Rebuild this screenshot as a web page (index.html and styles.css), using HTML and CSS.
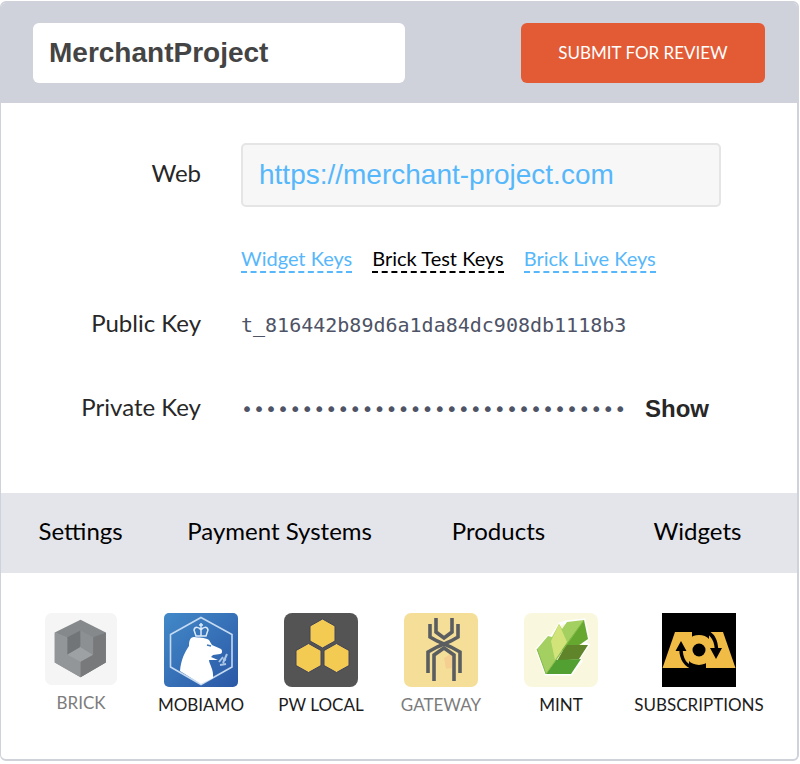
FILE: index.html
```html
<!DOCTYPE html>
<html lang="en">
<head>
  <meta charset="UTF-8">
  <title>MerchantProject</title>
  <meta name="viewport" content="width=device-width, initial-scale=1">
  <link rel="stylesheet" href="styles.css">
</head>
<body>

  <main class="project">

    <!-- Header -->
    <header class="project-header">
      <input class="project-name" type="text" value="MerchantProject" aria-label="Project name">
      <button class="submit-btn" type="button">SUBMIT FOR REVIEW</button>
    </header>

    <!-- Keys -->
    <section class="details">
      <label class="label" for="web">Web</label>
      <input class="url" type="url" id="web" value="https://merchant-project.com">

      <div class="key-links">
        <a class="key-link" href="#widget">Widget Keys</a>
        <a class="key-link active" href="#test">Brick Test Keys</a>
        <a class="key-link" href="#live">Brick Live Keys</a>
      </div>

      <label class="label" for="publicKey">Public Key</label>
      <input class="key" type="text" id="publicKey" value="t_816442b89d6a1da84dc908db1118b3" readonly>

      <label class="label" for="privateKey">Private Key</label>
      <div class="private">
        <input class="key" type="password" id="privateKey" value="t_000000000000000000000000000000" readonly>
        <button class="show-btn" type="button">Show</button>
      </div>
    </section>

    <!-- Navigation -->
    <nav class="tabs">
      <a href="#settings">Settings</a>
      <a href="#systems">Payment Systems</a>
      <a href="#products">Products</a>
      <a href="#widgets">Widgets</a>
    </nav>

    <!-- Products -->
    <section class="products">
      <a class="product disabled" href="#brick">
        <svg class="icon small" viewBox="0 0 74 74">
          <rect width="74" height="74" rx="7" fill="#f5f5f5"/>
          <path d="M36.5 7L62.5 20L36.5 34L10 20Z" fill="#85898b"/>
          <path d="M10 20L36.5 34V66L10 51Z" fill="#929698"/>
          <path d="M62.5 20L36.5 34V66L62.5 51Z" fill="#77797b"/>
          <path d="M10 20L23 25V43L36.5 50V66L10 51Z" fill="#929698"/>
          <path d="M62.5 20L49.5 25V43L36.5 50V66L62.5 51Z" fill="#77797b"/>
          <path d="M23 25L36.5 18V35L23 43Z" fill="#727577"/>
          <path d="M36.5 18L49.5 25V43L36.5 35Z" fill="#8c9092"/>
          <path d="M23 43L36.5 35L49.5 43L36.5 50Z" fill="#9da1a3"/>
        </svg>
        <span>BRICK</span>
      </a>
      <a class="product" href="#mobiamo">
        <svg class="icon" viewBox="0 0 74 74">
          <defs>
            <linearGradient id="sky" x1="0" y1="0" x2="1" y2="1">
              <stop offset="0" stop-color="#4289c8"/>
              <stop offset="1" stop-color="#2b58a6"/>
            </linearGradient>
          </defs>
          <rect width="74" height="74" rx="5" fill="url(#sky)"/>
          <path d="M37 4.5L68 21.5V54L37 71.5L6.5 54V21.5Z" fill="none" stroke="#c5daf0" stroke-width="1.6"/>
          <path d="M16 58C17 46 21 39 25 33C25 28 26 24 30 24C35 25 40 24 45 27L48 32L57 36C59 38 58 41 56 41L49 42L47 44L54 47L45 47C45 51 50 56 49 65L37 71Z" fill="#fff"/>
          <path d="M43 32L47 33" stroke="#3979bd" stroke-width="1.5"/>
          <path d="M32 23L30 17C31 13 35 14 37 17C39 14 43 13 44 17L42 23ZM37 10V23M35 12H39" fill="none" stroke="#dceaf8" stroke-width="1.5"/>
          <path d="M55 49L59 44M59 50L63 41M56 52L62 51M59 46L62 47" stroke="#a9c6e6" stroke-width="2"/>
        </svg>
        <span>MOBIAMO</span>
      </a>
      <a class="product" href="#local">
        <svg class="icon" viewBox="0 0 74 74">
          <rect width="74" height="74" rx="8" fill="#545454"/>
          <g fill="#f4cb52" stroke="#40425a" stroke-width="1">
            <path d="M38.5 6L51 13V28L38.5 35L26 28V13Z"/>
            <path d="M24.5 30.5L37 37.5V52.5L24.5 59.5L12 52.5V37.5Z"/>
            <path d="M52.5 30.5L65 37.5V52.5L52.5 59.5L40 52.5V37.5Z"/>
          </g>
        </svg>
        <span>PW LOCAL</span>
      </a>
      <a class="product disabled" href="#gateway">
        <svg class="icon" viewBox="0 0 74 74">
          <rect width="74" height="74" rx="7" fill="#f5df98"/>
          <path d="M40 45L48 40V55L42 56Z" fill="#f5cf91"/>
          <g fill="none" stroke="#5b5e60" stroke-width="3.6">
            <path d="M32 5V19L40 25L48 19V5"/>
            <path d="M26 11V24L33 28L47 34L56 39V60"/>
            <path d="M54 11V24L47 28L33 34L24 39V60"/>
            <path d="M30 68V42L40 35L50 42V68"/>
          </g>
        </svg>
        <span>GATEWAY</span>
      </a>
      <a class="product" href="#mint">
        <svg class="icon" viewBox="0 0 74 74">
          <rect width="74" height="74" rx="8" fill="#f9f8df"/>
          <path d="M60 7L42 9L36 11L28 23L24 24L13 36L22 61H47L57 48L55 45L64 32L60 30L64 25Z" fill="#f9f8df" stroke="#fff" stroke-width="3"/>
          <path d="M60 7L43 9L38 16L35 11L28 24L24 23L13 36L22 61Z" fill="#a4cf61"/>
          <path d="M35 11L27 28L31 47L43 29Z" fill="#d2e479"/>
          <path d="M60 7L64 26L48 37H38Z" fill="#66a730"/>
          <path d="M42 32L64 32L55 46L33 48Z" fill="#5f842a"/>
          <path d="M32 47L57 46L47 61H22Z" fill="#53a032"/>
          <path d="M13 36L22 61L60 7" fill="none" stroke="#83ba45" stroke-width="1"/>
        </svg>
        <span>MINT</span>
      </a>
      <a class="product" href="#subscriptions">
        <svg class="icon" viewBox="0 0 74 74">
          <rect width="74" height="74" fill="#000"/>
          <path d="M13 19H61L73.5 55H.5Z" fill="#f0bc45"/>
          <path d="M30 18H47V26H30ZM27 48H44V56H27Z" fill="#000"/>
          <circle cx="37" cy="37" r="15" fill="#f0bc45"/>
          <circle cx="37" cy="37" r="6.5" fill="#000"/>
          <path d="M19 36C19 46 24 53 32 55M54.500 38C54.500 28 51 21 43 18" fill="none" stroke="#000" stroke-width="3.500"/>
          <path d="M13.500 38L19 28L24.500 38ZM48 35H60L54 46Z" fill="#000"/>
        </svg>
        <span>SUBSCRIPTIONS</span>
      </a>
    </section>

  </main>

</body>
</html>
```
FILE: styles.css
```css
* { box-sizing: border-box; }
body { margin: 0; background: #fff; color: #272727; font-family: Lato, sans-serif; }
a { color: inherit; text-decoration: none; }
input, button { margin: 0; padding: 0; border: none; background: none; font-family: inherit; }

.project {
  margin: 1px 1px 0 0; border: 2px solid #cfd2da; border-left-width: 1px;
  border-radius: 6px; overflow: hidden;
}

/* Header */
.project-header {
  display: flex; justify-content: space-between; gap: 20px;
  padding: 20px 32px; background: #cfd2da;
}
.project-name {
  flex: 0 1 372px; min-width: 0; height: 60px; padding: 0 16px;
  background: #fff; border-radius: 6px; color: #444;
  font: bold 28px "Liberation Sans", sans-serif;
}
.submit-btn {
  flex: 0 0 244px; height: 60px; padding-bottom: 2px; border-radius: 6px;
  background: #e35b35; color: #fff; font-size: 17px; cursor: pointer;
}

/* Keys */
.details {
  display: grid; grid-template-columns: 200px 1fr; column-gap: 40px;
  align-items: center; padding: 40px 76px 42px 0;
}
.label { padding-bottom: 4px; font-size: 24px; line-height: 60px; text-align: right; }
.url {
  width: 100%; height: 64px; padding: 0 16px;
  background: #f7f7f7; border: 2px solid #e5e5e5; border-radius: 5px; color: #56b7fb;
  font: 28px "Liberation Sans", sans-serif;
}
.key-links { grid-column: 2; display: flex; gap: 20px; margin: 40px 0 10px; }
.key-link {
  padding-bottom: 2px; border-bottom: 2px dashed #56b7fb; color: #56b7fb;
  font-size: 20px; line-height: 22px; white-space: nowrap;
}
.key-link.active { border-color: #000; color: #000; }
.key {
  width: 386px; height: 84px; color: #4e5366;
  font: 20px "DejaVu Sans Mono", monospace;
}
.private { display: flex; align-items: center; gap: 18px; }
.show-btn {
  color: #272727; font: bold 24px "Liberation Sans", sans-serif; cursor: pointer;
}

/* Navigation */
.tabs {
  display: grid; grid-template-columns: 20% 30% 25% 25%; padding-bottom: 4px;
  background: #e4e5ea; color: #000; font-size: 24px; line-height: 76px; text-align: center;
}

/* Products */
.products {
  display: grid; grid-template-columns: repeat(5, 10fr) 13fr;
  padding: 40px 20px 42px;
}
.product {
  display: flex; flex-direction: column; align-items: center; gap: 6px;
  color: #1c1c1c; font-size: 17px; line-height: 24px;
}
.product.disabled { color: #7c7c7c; }
.icon { width: 74px; height: 74px; }
.icon.small { width: 72px; height: 72px; }
```
